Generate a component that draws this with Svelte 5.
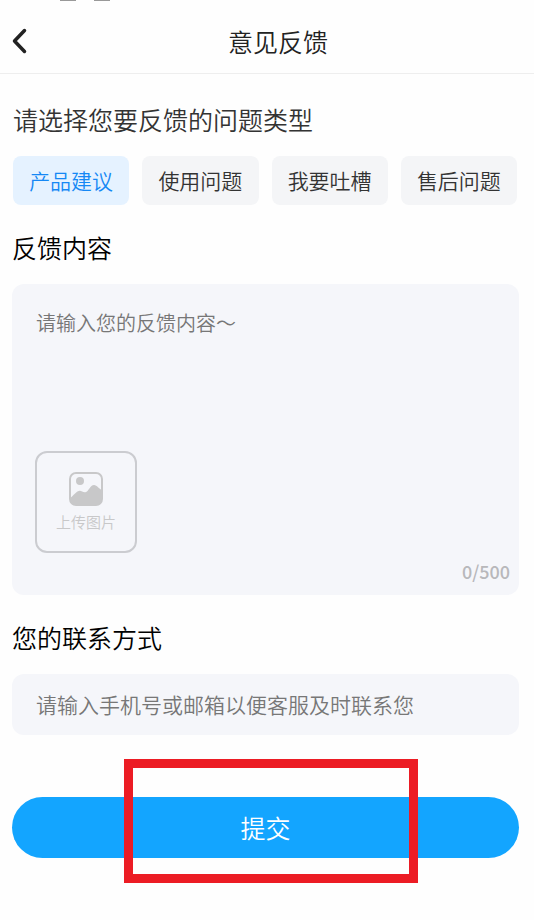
<script lang="ts">
  const types = ['产品建议', '使用问题', '我要吐槽', '售后问题'];
  const maxLength = 500;

  let selected = $state(types[0]);
  let content = $state('');
  let contact = $state('');

  function onsubmit(e: SubmitEvent) {
    e.preventDefault();
  }
</script>

<div class="status-bar"><span></span><span></span></div>

<header>
  <button class="back" type="button" aria-label="返回">
    <svg viewBox="0 0 18 26" width="18" height="26" aria-hidden="true">
      <path d="M14.500 2.500 L4.500 13 L14.500 23.500" />
    </svg>
  </button>
  <h1>意见反馈</h1>
</header>

<form {onsubmit}>
  <h2 class="question" id="type-label">请选择您要反馈的问题类型</h2>
  <div class="types" role="group" aria-labelledby="type-label">
    {#each types as type}
      <button
        type="button"
        class:active={selected === type}
        aria-pressed={selected === type}
        onclick={() => (selected = type)}
      >
        {type}
      </button>
    {/each}
  </div>

  <label class="title" for="content">反馈内容</label>
  <div class="editor">
    <textarea id="content" maxlength={maxLength} placeholder="请输入您的反馈内容～" bind:value={content}></textarea>
    <button class="upload" type="button">
      <svg viewBox="0 0 34 34" width="34" height="34" aria-hidden="true">
        <rect x="1" y="1" width="32" height="32" rx="6" fill="none" stroke="currentColor" stroke-width="2" />
        <circle cx="11" cy="9" r="4" fill="currentColor" />
        <path
          d="M1 26 C4 24 7 19.500 10 19 C12 18 14 21 17 20 C20 19 21 13 25 13 C28 13 30 17 33 18 V27 Q33 33 27 33 H7 Q1 33 1 27 Z"
          fill="currentColor"
        />
      </svg>
      <span>上传图片</span>
    </button>
    <span class="count">{content.length}/{maxLength}</span>
  </div>

  <label class="title" for="contact">您的联系方式</label>
  <input id="contact" type="text" placeholder="请输入手机号或邮箱以便客服及时联系您" bind:value={contact} />

  <div class="actions">
    <button class="submit" type="submit">提交</button>
    <div class="highlight"></div>
  </div>
</form>

<style>
  :global(body) {
    background: #fefefe;
    font-family: 'Noto Sans CJK SC', 'Noto Sans', sans-serif;
    font-weight: 350;
  }
  button,
  input,
  textarea {
    box-sizing: border-box;
    margin: 0;
    padding: 0;
    border: 0;
    font-family: inherit;
    font-weight: inherit;
  }
  button {
    cursor: pointer;
  }
  .status-bar {
    display: flex;
    gap: 18px;
    height: 1px;
    padding-left: 60px;
  }
  .status-bar span {
    width: 16px;
    background: #999;
  }
  header {
    display: flex;
    align-items: center;
    height: 64px;
    padding: 8px 12px 0 10px;
    border-bottom: 1px solid #eee;
  }
  .back {
    display: flex;
    align-items: center;
    width: 24px;
    height: 48px;
    background: none;
  }
  .back path {
    fill: none;
    stroke: #222;
    stroke-width: 3.5;
    stroke-linecap: round;
    stroke-linejoin: round;
  }
  h1 {
    flex: 1;
    margin: 0;
    color: #222;
    font-size: 25px;
    font-weight: inherit;
    line-height: 36px;
    text-align: center;
  }
  form {
    padding: 27px 15px 36px 12px;
  }
  .question,
  .title {
    display: block;
    margin: 0 0 19px;
    font-size: 25px;
    font-weight: inherit;
    line-height: 36px;
  }
  .question {
    margin-left: 1px;
    color: #333;
  }
  .title {
    margin-top: 24px;
    color: #000;
  }
  .types {
    display: grid;
    grid-template-columns: repeat(4, 1fr);
    gap: 13px;
    margin: 0 2px 0 1px;
  }
  .types button {
    height: 49px;
    padding-bottom: 2px;
    border-radius: 8px;
    background: #f4f5f7;
    color: #333;
    font-size: 21px;
    white-space: nowrap;
  }
  .types .active {
    background: #e5f2ff;
    color: #1588f5;
  }
  .editor {
    display: flex;
    flex-direction: column;
    padding: 24px 9px 10px 23px;
    border-radius: 12px;
    background: #f5f6fa;
  }
  textarea {
    height: 143px;
    padding: 0 1px;
    background: none;
    color: #333;
    font-size: 20px;
    line-height: 30px;
    resize: none;
    outline: none;
  }
  ::placeholder {
    color: #777;
    opacity: 1;
  }
  .upload {
    display: flex;
    flex-direction: column;
    align-items: center;
    justify-content: center;
    gap: 4px;
    width: 102px;
    height: 102px;
    padding-top: 2px;
    border: 2px solid #cbccd0;
    border-radius: 12px;
    background: none;
    color: #c8c8c9;
    font-size: 15px;
    line-height: 24px;
  }
  .count {
    align-self: flex-end;
    margin-top: 4px;
    color: #b8b8bb;
    font-size: 18px;
    font-weight: 500;
    line-height: 28px;
  }
  input {
    width: 100%;
    height: 61px;
    padding: 0 24px 2px;
    border-radius: 12px;
    background: #f5f6fa;
    color: #333;
    font-size: 21px;
    outline: none;
  }
  .actions {
    position: relative;
    margin-top: 62px;
  }
  .submit {
    display: block;
    width: 100%;
    height: 61px;
    padding-bottom: 2px;
    border-radius: 31px;
    background: #13a5ff;
    color: #fff;
    font-size: 25px;
  }
  .highlight {
    position: absolute;
    inset: -38px 20% -25px 22%;
    border: 9px solid #ec1c24;
    pointer-events: none;
  }
</style>
